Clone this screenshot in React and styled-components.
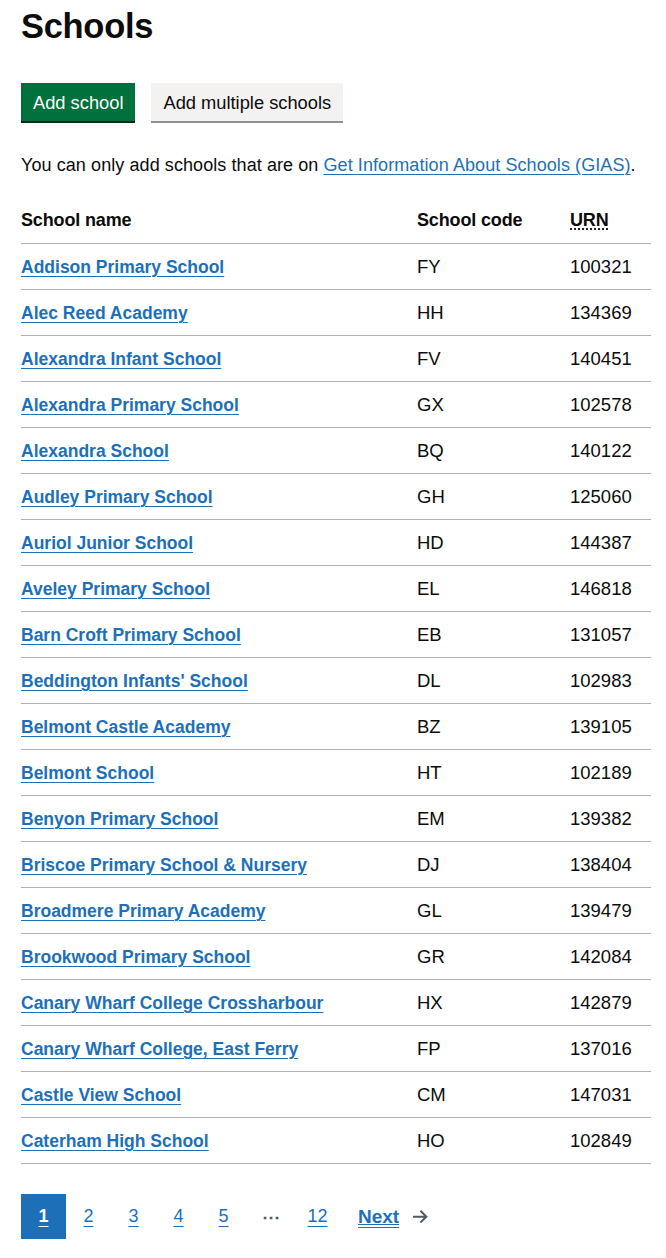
import React from "react";
import styled, { createGlobalStyle } from "styled-components";

const GlobalStyle = createGlobalStyle`
  body {
    margin: 0;
    background: #ffffff;
    color: #0b0c0c;
    font-family: "Liberation Sans", Arial, sans-serif;
  }
`;

const schools = [
  ["Addison Primary School", "FY", "100321"],
  ["Alec Reed Academy", "HH", "134369"],
  ["Alexandra Infant School", "FV", "140451"],
  ["Alexandra Primary School", "GX", "102578"],
  ["Alexandra School", "BQ", "140122"],
  ["Audley Primary School", "GH", "125060"],
  ["Auriol Junior School", "HD", "144387"],
  ["Aveley Primary School", "EL", "146818"],
  ["Barn Croft Primary School", "EB", "131057"],
  ["Beddington Infants' School", "DL", "102983"],
  ["Belmont Castle Academy", "BZ", "139105"],
  ["Belmont School", "HT", "102189"],
  ["Benyon Primary School", "EM", "139382"],
  ["Briscoe Primary School & Nursery", "DJ", "138404"],
  ["Broadmere Primary Academy", "GL", "139479"],
  ["Brookwood Primary School", "GR", "142084"],
  ["Canary Wharf College Crossharbour", "HX", "142879"],
  ["Canary Wharf College, East Ferry", "FP", "137016"],
  ["Castle View School", "CM", "147031"],
  ["Caterham High School", "HO", "102849"],
];

const pages = ["1", "2", "3", "4", "5", "…", "12"];

const Page = styled.main`
  padding: 0 15px 0 21px;
`;

const Heading = styled.h1`
  margin: 0;
  padding-top: 6px;
  font-size: 34.5px;
  line-height: 40px;
  font-weight: 700;
  letter-spacing: -0.3px;
`;

const ButtonGroup = styled.div`
  display: flex;
  gap: 16px;
  margin-top: 37px;
`;

const Button = styled.button`
  font-family: inherit;
  font-size: 18.3px;
  line-height: 1;
  padding: 9px 10px 6px;
  border: 2px solid transparent;
  border-radius: 0;
  height: 38px;
  background: ${(p) => (p.$secondary ? "#f3f2f1" : "#00703c")};
  color: ${(p) => (p.$secondary ? "#0b0c0c" : "#ffffff")};
  box-shadow: 0 2px 0 ${(p) => (p.$secondary ? "#929191" : "#002d18")};
  cursor: pointer;
`;

const Body = styled.p`
  margin: 32px 0 0;
  font-size: 18px;
  line-height: 25px;
  letter-spacing: 0.08px;
`;

const Link = styled.a`
  color: #1d70b8;
  text-decoration: underline;
  text-decoration-thickness: 1px;
  text-underline-offset: 3px;
  font-weight: ${(p) => (p.$bold ? 700 : 400)};
  font-size: ${(p) => (p.$bold ? "17.5px" : "inherit")};
  letter-spacing: ${(p) => (p.$bold ? "0" : "inherit")};
`;

const Table = styled.table`
  width: 630px;
  margin-top: 20px;
  border-collapse: collapse;
  table-layout: fixed;
  font-size: 18.5px;
`;

const HeadCell = styled.th`
  text-align: left;
  font-weight: 700;
  font-size: 18px;
  letter-spacing: -0.15px;
  height: 45px;
  padding: 0;
  border-bottom: 1px solid #b1b4b6;
  width: ${(p) => p.$w || "auto"};
`;

const Cell = styled.td`
  height: 45px;
  padding: 0;
  border-bottom: 1px solid #b1b4b6;
`;

const Abbr = styled.abbr`
  text-decoration: underline dotted;
  text-underline-offset: 3px;
  cursor: help;
`;

const Pagination = styled.nav`
  display: flex;
  align-items: center;
  margin-top: 30px;
`;

const PageItem = styled.a`
  display: flex;
  align-items: center;
  justify-content: center;
  min-width: 45px;
  height: 45px;
  font-size: 18px;
  color: ${(p) => (p.$current ? "#ffffff" : "#1d70b8")};
  background: ${(p) => (p.$current ? "#1d70b8" : "transparent")};
  font-weight: ${(p) => (p.$current ? 700 : 400)};
  text-decoration: underline;
  text-decoration-thickness: 1px;
  text-underline-offset: 4px;
`;

const Ellipsis = styled.span`
  display: flex;
  align-items: center;
  justify-content: center;
  min-width: 49px;
  height: 45px;
  color: #505a5f;
  font-size: 18px;
  font-weight: 700;
`;

const NextLink = styled.a`
  display: flex;
  align-items: center;
  gap: 14px;
  margin-left: 18px;
  font-size: 19px;
  font-weight: 700;
  color: #1d70b8;
  span {
    text-decoration: underline;
    text-decoration-thickness: 1px;
    text-underline-offset: 4px;
  }
  svg {
    fill: #505a5f;
  }
`;

export default function App() {
  return (
    <>
      <GlobalStyle />
      <Page>
        <Heading>Schools</Heading>
        <ButtonGroup>
          <Button>Add school</Button>
          <Button $secondary>Add multiple schools</Button>
        </ButtonGroup>
        <Body>
          You can only add schools that are on{" "}
          <Link href="#">Get Information About Schools (GIAS)</Link>.
        </Body>
        <Table>
          <thead>
            <tr>
              <HeadCell $w="396px">School name</HeadCell>
              <HeadCell $w="153px">School code</HeadCell>
              <HeadCell>
                <Abbr title="Unique reference number">URN</Abbr>
              </HeadCell>
            </tr>
          </thead>
          <tbody>
            {schools.map(([name, code, urn]) => (
              <tr key={urn}>
                <Cell>
                  <Link href="#" $bold>
                    {name}
                  </Link>
                </Cell>
                <Cell>{code}</Cell>
                <Cell>{urn}</Cell>
              </tr>
            ))}
          </tbody>
        </Table>
        <Pagination aria-label="Pagination">
          {pages.map((p) =>
            p === "…" ? (
              <Ellipsis key={p}>⋯</Ellipsis>
            ) : (
              <PageItem key={p} href="#" $current={p === "1"}>
                {p}
              </PageItem>
            )
          )}
          <NextLink href="#">
            <span>Next</span>
            <svg width="15" height="13" viewBox="0 0 15 13" aria-hidden="true">
              <path d="m8.107-0.0078125-1.4136 1.414 4.2926 4.293h-12.986v2h12.896l-4.1855 3.9766 1.377 1.4492 6.7441-6.4062-6.7246-6.7266z" />
            </svg>
          </NextLink>
        </Pagination>
      </Page>
    </>
  );
}
